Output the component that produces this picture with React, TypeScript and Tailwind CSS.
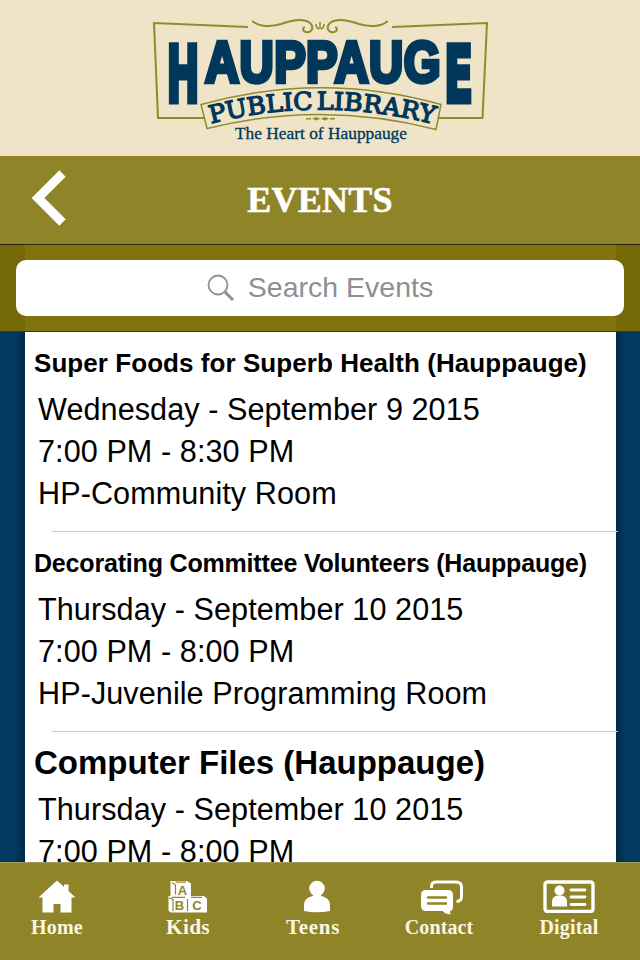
import type { ReactNode } from 'react';

type LibraryEvent = {
  title: string;
  titleClass: string;
  date: string;
  time: string;
  room?: string;
};

const events: LibraryEvent[] = [
  {
    title: 'Super Foods for Superb Health (Hauppauge)',
    titleClass: 'text-[26px] tracking-[0.06px]',
    date: 'Wednesday - September 9 2015',
    time: '7:00 PM - 8:30 PM',
    room: 'HP-Community Room',
  },
  {
    title: 'Decorating Committee Volunteers (Hauppauge)',
    titleClass: 'text-[25px] tracking-[-0.18px]',
    date: 'Thursday - September 10 2015',
    time: '7:00 PM - 8:00 PM',
    room: 'HP-Juvenile Programming Room',
  },
  {
    title: 'Computer Files (Hauppauge)',
    titleClass: 'text-[33px]',
    date: 'Thursday - September 10 2015',
    time: '7:00 PM - 8:00 PM',
  },
];

function Logo() {
  return (
    <svg width="340" height="130" viewBox="150 16 340 130" className="block">
      <g fill="none" stroke="#948a2c" strokeWidth="2">
        <path d="M248 27 L154 23 L158 118 H204" />
        <path d="M392 27 L487 23 L482.5 118 H438" />
        <path
          d="M253 21.5 C259 27 271 27 281 24 C292 20 304 18 310 23 C315 28 311 33 306 32 C303 31.5 302.5 29 304 27.5"
          strokeLinecap="round"
        />
        <path
          d="M387 21.5 C381 27 369 27 359 24 C348 20 336 18 330 23 C325 28 329 33 334 32 C337 31.5 337.5 29 336 27.5"
          strokeLinecap="round"
        />
        <path d="M320 29 V22 M319 29 Q316 28 316 24 M321 29 Q324 28 324 24" strokeWidth="1.6" />
      </g>

      <g fill="#00375a" stroke="#00375a" fontWeight="700">
        <g fontFamily="'DejaVu Sans', sans-serif" fontSize="79" strokeWidth="4">
          <text transform="translate(166.4 102) scale(0.5 1)" vectorEffect="non-scaling-stroke">
            H
          </text>
          <text transform="translate(444 102) scale(0.54 1)" vectorEffect="non-scaling-stroke">
            E
          </text>
        </g>
        <text
          transform="translate(205 82) scale(0.83 1)"
          fontFamily="'Liberation Sans', Arial, sans-serif"
          fontSize="57"
          strokeWidth="4"
          letterSpacing="0.5"
          vectorEffect="non-scaling-stroke"
        >
          AUPPAUG
        </text>
      </g>

      <path
        d="M201 104.5 Q321 71 441 104.5 L436 129.5 Q321 100 207 128.5 Z"
        fill="#efe4c8"
        stroke="#948a2c"
        strokeWidth="1.5"
      />
      <path id="banner-line" d="M211 123.5 Q321 95 435 124.5" fill="none" />
      <text
        fill="#00375a"
        stroke="#00375a"
        strokeWidth="1.3"
        fontFamily="'DejaVu Serif', serif"
        fontSize="24.5"
        wordSpacing="-4"
      >
        <textPath href="#banner-line" textLength="225" lengthAdjust="spacingAndGlyphs">
          PUBLIC LIBRARY
        </textPath>
      </text>

      <g fill="#948a2c">
        <path d="M306 118 h5 v1.5 h-5z M330 118 h5 v1.5 h-5z" />
        <path d="M312 118.7 l4 -1.8 l4.5 1.8 l4.5 -1.8 l4 1.8 l-4 1.8 l-4.5 -1.8 l-4.5 1.8z" />
      </g>
      <text
        x="235"
        y="138.5"
        fill="#00375a"
        stroke="#00375a"
        strokeWidth="0.3"
        fontFamily="'Liberation Serif', 'Times New Roman', serif"
        fontSize="17"
        textLength="172"
        lengthAdjust="spacingAndGlyphs"
      >
        The Heart of Hauppauge
      </text>
    </svg>
  );
}

function HomeIcon() {
  return (
    <svg width="38" height="33" viewBox="0 0 38 33" fill="#fff">
      <path d="M19 0.5 L26 7 V4.5 H30.5 V11 L37.5 17.5 H33.5 V32.5 H22.5 V24 H15.5 V32.5 H4.5 V17.5 H0.5 Z" />
    </svg>
  );
}

function KidsIcon() {
  return (
    <svg width="40" height="33" viewBox="0 0 40 33">
      <path d="M2.5 1 H19 L23 3.5 V16 H36 L39 18.5 V32.5 H2.5 L0.5 30.5 V16 H2.5 Z" fill="#fff" />
      <g fill="none" stroke="#91862a" strokeWidth="1.2">
        <path d="M4 2.5 L7.5 5 V14.5 M7.5 2.2 H18" />
        <path d="M1 18 L5 19.5 V31 M4 17.3 H17 M19.5 19 V31 M23 17.3 H34" />
      </g>
      <g
        fill="#91862a"
        fontFamily="'Liberation Sans', Arial, sans-serif"
        fontSize="13"
        fontWeight="700"
        textAnchor="middle"
      >
        <text x="14.5" y="14.5">A</text>
        <text x="11.5" y="30">B</text>
        <text x="29" y="30">C</text>
      </g>
    </svg>
  );
}

function TeensIcon() {
  return (
    <svg width="28" height="33" viewBox="0 0 28 33" fill="#fff">
      <circle cx="14" cy="8.5" r="7.8" />
      <path d="M10 13 H18 V16 C23.5 17 27 20 27 25.5 V31 Q14 33.5 1 31 V25.5 C1 20 4.5 17 10 16 Z" />
    </svg>
  );
}

function ContactIcon() {
  return (
    <svg width="44" height="35" viewBox="0 0 44 35">
      <path
        d="M11.5 8 V6.5 Q11.5 2 16 2 H36 Q41.5 2 41.5 7 V16.5 Q41.5 21.5 36.5 21.5"
        fill="none"
        stroke="#fff"
        strokeWidth="3"
      />
      <path
        d="M6 10 H28 Q33 10 33 15 V26 Q33 31 30 31 L30.5 34.5 Q25 34 22.5 31 H6 Q1 31 1 26 V15 Q1 10 6 10 Z"
        fill="#fff"
      />
      <path d="M8 17.5 H26 M8 23.5 H26" stroke="#91862a" strokeWidth="2.4" strokeLinecap="round" />
    </svg>
  );
}

function DigitalIcon() {
  return (
    <svg width="52" height="33" viewBox="0 0 52 33">
      <rect x="2" y="2" width="48" height="29.5" rx="2.5" fill="none" stroke="#fff" strokeWidth="3.4" />
      <g fill="#fff">
        <circle cx="16.5" cy="10.5" r="5" />
        <path d="M9 26.5 V22 Q9 16 15 15.5 H18 Q24 16 24 22 V26.5 Z" />
      </g>
      <path d="M28 10 H42 M28 17 H42 M28 24.5 H42" stroke="#fff" strokeWidth="2.8" strokeLinecap="round" />
    </svg>
  );
}

type Tab = {
  label: string;
  width: string;
  labelClass: string;
  iconClass: string;
  icon: ReactNode;
};

const tabs: Tab[] = [
  { label: 'Home', width: 'w-[114px]', labelClass: 'text-[20px] tracking-[0.2px]', iconClass: '', icon: <HomeIcon /> },
  { label: 'Kids', width: 'w-[148px]', labelClass: 'text-[21.5px] tracking-[0.2px]', iconClass: '', icon: <KidsIcon /> },
  { label: 'Teens', width: 'w-[102px]', labelClass: 'text-[21px] tracking-[0.7px]', iconClass: 'pl-[7px]', icon: <TeensIcon /> },
  { label: 'Contact', width: 'w-[150px]', labelClass: 'text-[20px] tracking-[0.1px]', iconClass: 'pl-[5px]', icon: <ContactIcon /> },
  { label: 'Digital', width: 'w-[110px]', labelClass: 'text-[20px] tracking-[0.2px]', iconClass: '', icon: <DigitalIcon /> },
];

function EventRow({ event }: { event: LibraryEvent }) {
  return (
    <li className="h-[200px] shrink-0 whitespace-nowrap text-black">
      <h2 className={`h-[56px] pl-[9px] font-bold leading-[62px] ${event.titleClass}`}>{event.title}</h2>
      <div className="h-[126px] pl-[13px] text-[30.6px] leading-[42px] tracking-[0.07px]">
        <p>{event.date}</p>
        <p>{event.time}</p>
        {event.room && <p>{event.room}</p>}
      </div>
      <div className="ml-[27px] mt-[17px] -mr-[2px] h-px bg-[#c8c7cc]" />
    </li>
  );
}

export default function App() {
  return (
    <div className="flex h-[960px] w-[640px] flex-col overflow-hidden bg-[#00375a] font-['Liberation_Sans',Arial,sans-serif]">
      <header className="flex h-[156px] shrink-0 justify-center bg-[#efe4c8] pt-4">
        <Logo />
      </header>

      <nav className="grid h-[89px] shrink-0 grid-cols-[100px_1fr_100px] items-center border-b border-[#29250f] bg-[#8f8428]">
        <button className="pl-[31px]" aria-label="Back">
          <svg width="36" height="58" viewBox="0 0 36 58" className="-mt-1 block">
            <path d="M31.5 4.5 L7 29 L31.5 53.5" fill="none" stroke="#fff" strokeWidth="9" />
          </svg>
        </button>
        <h1 className="text-center font-['Liberation_Serif',serif] text-[36px] font-bold leading-none tracking-[0.2px] text-white [-webkit-text-stroke:0.6px_white]">
          EVENTS
        </h1>
      </nav>

      <div className="flex h-[87px] shrink-0 items-center border-b border-[#3a350a] bg-[linear-gradient(90deg,#766a08_25px,#82740c_25px,#82740c_616px,#766a08_616px)] px-4">
        <div className="flex h-14 w-full items-center justify-center rounded-[10px] bg-white text-[#8e8e93]">
          <svg width="28" height="28" viewBox="0 0 28 28" fill="none" stroke="#8e8e93">
            <circle cx="11" cy="11" r="9.5" strokeWidth="1.8" />
            <path d="M18 18 L26 26" strokeWidth="3" />
          </svg>
          <span className="-mt-0.5 ml-[13px] text-[28.5px]">Search Events</span>
        </div>
      </div>

      <main className="flex min-h-0 flex-1 overflow-hidden bg-[linear-gradient(90deg,#003a5e_15px,#002a48_25px,#002a48_616px,#003a5e_626px)] pl-[25px] pr-6">
        <ul className="flex w-full flex-col bg-white">
          {events.map((event, i) => (
            <EventRow key={i} event={event} />
          ))}
        </ul>
      </main>

      <footer className="flex h-[98px] shrink-0 border-t border-[#a29a58] bg-[#8f8428]">
        {tabs.map((tab) => (
          <button key={tab.label} className={`flex flex-col items-center ${tab.width}`}>
            <span className={`mt-[17px] flex h-[35px] items-start ${tab.iconClass}`}>{tab.icon}</span>
            <span
              className={`font-['Liberation_Serif',serif] font-bold leading-[24px] text-[#fbf7e3] ${tab.labelClass}`}
            >
              {tab.label}
            </span>
          </button>
        ))}
      </footer>
    </div>
  );
}
